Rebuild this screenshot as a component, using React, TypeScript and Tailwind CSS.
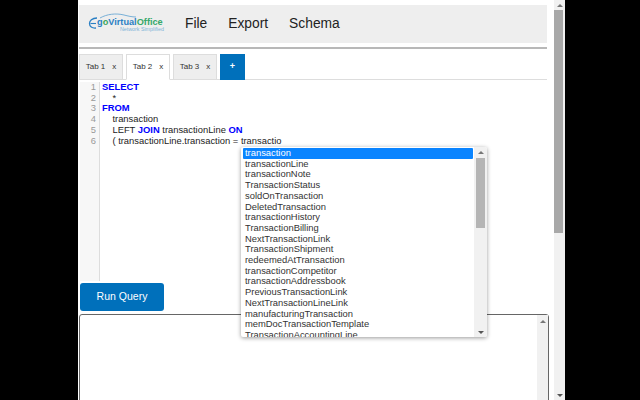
import React from "react";

const items = ["transactionLine","transactionNote","TransactionStatus","soldOnTransaction","DeletedTransaction","transactionHistory","TransactionBilling","NextTransactionLink","TransactionShipment","redeemedAtTransaction","transactionCompetitor","transactionAddressbook","PreviousTransactionLink","NextTransactionLineLink","manufacturingTransaction","memDocTransactionTemplate","TransactionAccountingLine"];

const Kw = ({ children }: { children: React.ReactNode }) => <span className="font-bold text-[#0000ff]">{children}</span>;

function Logo() {
  return (
    <div className="relative w-[82px] h-[24px] shrink-0">
      <svg className="absolute left-0 top-0" width="82" height="24" viewBox="0 0 82 24" fill="none">
        <path d="M9 6 C 4 6 1.5 9 1.5 11.5 C 1.5 14.5 4 16.5 8 16" stroke="#2a7fc4" strokeWidth="1.3" />
        <path d="M2.5 11.5 H8" stroke="#2a7fc4" strokeWidth="1.1" />
        <path d="M12 6 C 19 2 28 1 36 3 C 40 4 44 5 48 5" stroke="#5a9fd0" strokeWidth="0.8" />
      </svg>
      <span className="absolute left-[9px] top-[5px] text-[9.2px] leading-[10px] font-bold whitespace-nowrap">
        <span className="text-[#2a7fc4]">g</span><span className="text-[#3aa55a]">o</span><span className="text-[#2a7fc4]">Virtual</span><span className="text-[#35a86a]">Office</span>
      </span>
      <span className="absolute left-[32px] top-[15px] text-[5.3px] leading-[5px] text-[#7fb4d8] whitespace-nowrap">Network Simplified</span>
    </div>
  );
}

function Tab({ label, active }: { label: string; active?: boolean }) {
  return (
    <div className={`w-[44px] h-[26px] shrink-0 flex items-center justify-center gap-[7px] text-[8px] text-[#333] border border-[#ddd] ${active ? "bg-white border-b-white" : "bg-[#eeeeee]"}`}>
      <span>{label}</span><span>x</span>
    </div>
  );
}

const Up = () => <div className="w-0 h-0 border-x-[3px] border-x-transparent border-b-[3px] border-b-[#777]" />;
const Down = () => <div className="w-0 h-0 border-x-[3px] border-x-transparent border-t-[3px] border-t-[#555]" />;

export default function App() {
  return (
    <div className="h-[400px] w-[640px] overflow-hidden flex bg-black font-['Liberation_Sans',sans-serif]">
      <div className="w-[78px] shrink-0" />
      <div className="w-[487px] shrink-0 bg-white flex relative overflow-hidden">
        <div className="w-[476px] shrink-0 flex flex-col pl-px pt-[5px]">
          <div className="w-[468px] h-[38px] shrink-0 bg-[#eeeeee] flex items-center pl-[9px]">
            <Logo />
            <div className="flex gap-[21px] ml-[15px] text-[13.8px] text-[#222]">
              <span>File</span><span>Export</span><span>Schema</span>
            </div>
          </div>
          <div className="w-[468px] h-[2px] shrink-0 bg-[#b8b8b8] mt-[4px]" />
          <div className="w-[468px] shrink-0 flex gap-[3px] mt-[5px] border-b border-[#ddd] h-[26px]">
            <Tab label="Tab 1" />
            <Tab label="Tab 2" active />
            <Tab label="Tab 3" />
            <div className="w-[25px] h-[26px] bg-[#0070bb] text-white text-[9px] font-bold flex items-center justify-center">+</div>
          </div>
          <div className="h-[203px] shrink-0 flex pt-[2px] text-[9.4px] leading-[10.7px] text-[#222]">
            <div className="ml-px w-[20px] h-[199px] bg-[#f7f7f7] border-r border-[#ddd] text-[#999] text-right pr-[3px] shrink-0">
              {[1,2,3,4,5,6].map(n => <div key={n}>{n}</div>)}
            </div>
            <div className="pl-[2px] whitespace-pre">
              <div><Kw>SELECT</Kw></div>
              <div>{"    *"}</div>
              <div><Kw>FROM</Kw></div>
              <div>{"    transaction"}</div>
              <div>{"    LEFT "}<Kw>JOIN</Kw>{" transactionLine "}<Kw>ON</Kw></div>
              <div>{"    ( transactionLine.transaction = transactio"}</div>
            </div>
          </div>
          <div className="ml-px w-[84px] h-[28px] shrink-0 rounded-[3px] bg-[#0070bb] text-white text-[10.5px] flex items-center justify-center">Run Query</div>
          <div className="mt-[3px] w-[470px] h-[120px] shrink-0 border border-[#666] rounded-[3px] bg-white flex justify-end">
            <div className="w-[11px] bg-[#f1f1f1] flex justify-center pt-[5px]"><Up /></div>
          </div>
        </div>
        <div className="w-[11px] shrink-0 bg-[#f1f1f1] flex flex-col items-center justify-between pt-[4px] pb-[3px]">
          <Up />
          <div className="absolute top-[10px] right-[2px] w-[9px] h-[223px] bg-[#a8a8a8]" />
          <Down />
        </div>
        <div className="absolute left-[163px] top-[147px] w-[246px] h-[190px] bg-white shadow-[0_1px_4px_rgba(0,0,0,0.4)] rounded-[2px] flex overflow-hidden text-[9.4px] leading-[10.7px] text-[#333]">
          <div className="flex-1 pl-[2px] pt-[1px] overflow-hidden">
            <div className="h-[10.7px] bg-[#0a84ff] text-white pl-[2px] rounded-[1px] leading-[10px] mr-px">transaction</div>
            {items.map(t => <div key={t} className="pl-[2px]">{t}</div>)}
          </div>
          <div className="w-[13px] shrink-0 bg-[#f1f1f1] flex flex-col items-center justify-between pt-[4px] pb-[3px] relative">
            <Up />
            <div className="absolute top-[11px] left-[2px] w-[9px] h-[70px] bg-[#b5b5b5]" />
            <Down />
          </div>
        </div>
      </div>
      <div className="flex-1" />
    </div>
  );
}
